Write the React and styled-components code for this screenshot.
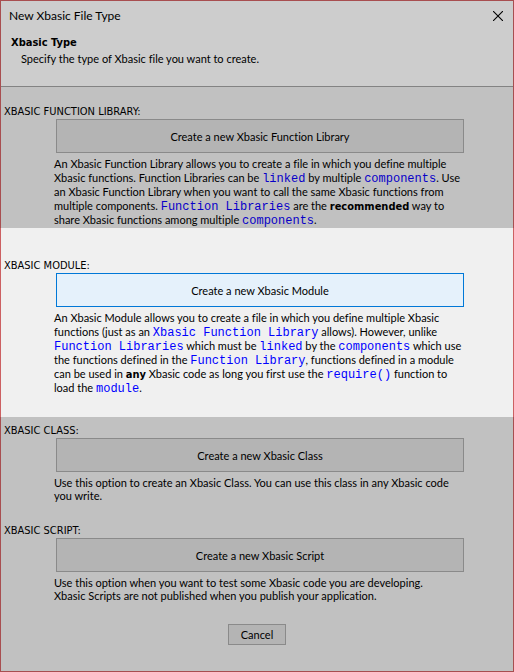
import React from "react";
import styled, { createGlobalStyle } from "styled-components";

const GlobalStyle = createGlobalStyle`
  *, *::before, *::after { box-sizing: border-box; }
  html, body, #root { height: 100%; }
  body { margin: 0; background: #c1c1c1; }
`;

const wideFont = `"DejaVu Sans Condensed", Tahoma, sans-serif`;

const Dialog = styled.main`
  display: flex;
  flex-direction: column;
  min-height: 100%;
  border-top: 1px solid #a84e50;
  border-bottom: 1px solid #a84e50;
  background: #c1c1c1;
  color: #000;
  font: 11px/13px Lato, Tahoma, sans-serif;
  font-variant-ligatures: none;
`;

const Header = styled.header`
  height: 86px;
  border: solid #a84e50;
  border-width: 0 1px;
  background: #cdcdcd;
  box-shadow: inset 0 -1px #838383;
`;

const TitleBar = styled.div`
  display: flex;
  align-items: center;
  justify-content: space-between;
  height: 29px;
  padding: 0 10px 0 8px;
`;

const Title = styled.h1`
  margin: 0;
  font-size: 12px;
  line-height: 16px;
  font-weight: normal;
`;

const CloseButton = styled.button`
  display: flex;
  padding: 0;
  border: 0;
  background: none;
  color: #000;
`;

const Heading = styled.h2`
  margin: 6px 10px 3px;
  font: bold 11px/13px ${wideFont};
`;

const Subheading = styled.p`
  margin: 0 20px;
`;

const Section = styled.section`
  padding: ${(p) => p.$top}px 49px ${(p) => p.$bottom}px 55px;
  border: solid ${(p) => (p.$lit ? "#cc6062" : "#a84e50")};
  border-width: 0 1px;
  background: ${(p) => (p.$lit ? "#f0f0f0" : "#c1c1c1")};
  --term: ${(p) => (p.$lit ? "#0000ff" : "#0800c8")};
`;

const SectionLabel = styled.h3`
  margin: 0 0 1px -52px;
  font: 11px/13px ${wideFont};
`;

const Button = styled.button`
  padding: 0;
  border: 1px solid ${(p) => (p.$lit ? "#0078d7" : "#8a8a8a")};
  background: ${(p) => (p.$lit ? "#e5f1fb" : "#b4b4b4")};
  color: #000;
  font: inherit;
  font-variant-ligatures: none;
`;

const CreateButton = styled(Button)`
  display: block;
  width: 100%;
  height: 34px;
`;

const Description = styled.p`
  margin: 4px -20px 0 -2px;
  line-height: ${(p) => (p.$rich ? 14 : 13)}px;
  white-space: nowrap;
`;

const Strong = styled.b`
  font-family: ${wideFont};
  line-height: 10px;
`;

const Term = styled.a`
  color: var(--term);
  font-family: "Liberation Mono", "Courier New", monospace;
  font-size: 12px;
  line-height: 10px;
  text-decoration: none;
`;

const Footer = styled.footer`
  display: flex;
  flex: 1;
  align-items: flex-start;
  justify-content: center;
  padding: 22px 0 25px;
  border: solid #a84e50;
  border-width: 0 1px;
`;

const CancelButton = styled(Button)`
  width: 58px;
  height: 21px;
`;

const T = ({ children }) => <Term href="#">{children}</Term>;

export default function App() {
  return (
    <>
      <GlobalStyle />
      <Dialog>
        <Header>
          <TitleBar>
            <Title>New Xbasic File Type</Title>
            <CloseButton type="button" aria-label="Close">
              <svg width="10" height="10" viewBox="0 0 10 10" aria-hidden="true">
                <path d="M0 0l10 10M10 0L0 10" stroke="currentColor" strokeWidth="1.1" />
              </svg>
            </CloseButton>
          </TitleBar>
          <Heading>Xbasic Type</Heading>
          <Subheading>Specify the type of Xbasic file you want to create.</Subheading>
        </Header>

        <Section $top={18} $bottom={1}>
          <SectionLabel>XBASIC FUNCTION LIBRARY:</SectionLabel>
          <CreateButton type="button">Create a new Xbasic Function Library</CreateButton>
          <Description $rich>
            An Xbasic Function Library allows you to create a file in which you define multiple
            <br />
            Xbasic functions. Function Libraries can be <T>linked</T> by multiple <T>components</T>. Use
            <br />
            an Xbasic Function Library when you want to call the same Xbasic functions from
            <br />
            multiple components. <T>Function Libraries</T> are the <Strong>recommended</Strong> way to
            <br />
            share Xbasic functions among multiple <T>components</T>.
          </Description>
        </Section>

        <Section $lit $top={31} $bottom={22}>
          <SectionLabel>XBASIC MODULE:</SectionLabel>
          <CreateButton type="button" $lit>Create a new Xbasic Module</CreateButton>
          <Description $rich>
            An Xbasic Module allows you to create a file in which you define multiple Xbasic
            <br />
            functions (just as an <T>Xbasic Function Library</T> allows). However, unlike
            <br />
            <T>Function Libraries</T> which must be <T>linked</T> by the <T>components</T> which use
            <br />
            the functions defined in the <T>Function Library</T>, functions defined in a module
            <br />
            can be used in <Strong>any</Strong> Xbasic code as long you first use the <T>require()</T> function to
            <br />
            load the <T>module</T>.
          </Description>
        </Section>

        <Section $top={7} $bottom={0}>
          <SectionLabel>XBASIC CLASS:</SectionLabel>
          <CreateButton type="button">Create a new Xbasic Class</CreateButton>
          <Description>
            Use this option to create an Xbasic Class. You can use this class in any Xbasic code
            <br />
            you write.
          </Description>
        </Section>

        <Section $top={22} $bottom={0}>
          <SectionLabel>XBASIC SCRIPT:</SectionLabel>
          <CreateButton type="button">Create a new Xbasic Script</CreateButton>
          <Description>
            Use this option when you want to test some Xbasic code you are developing.
            <br />
            Xbasic Scripts are not published when you publish your application.
          </Description>
        </Section>

        <Footer>
          <CancelButton type="button">Cancel</CancelButton>
        </Footer>
      </Dialog>
    </>
  );
}
